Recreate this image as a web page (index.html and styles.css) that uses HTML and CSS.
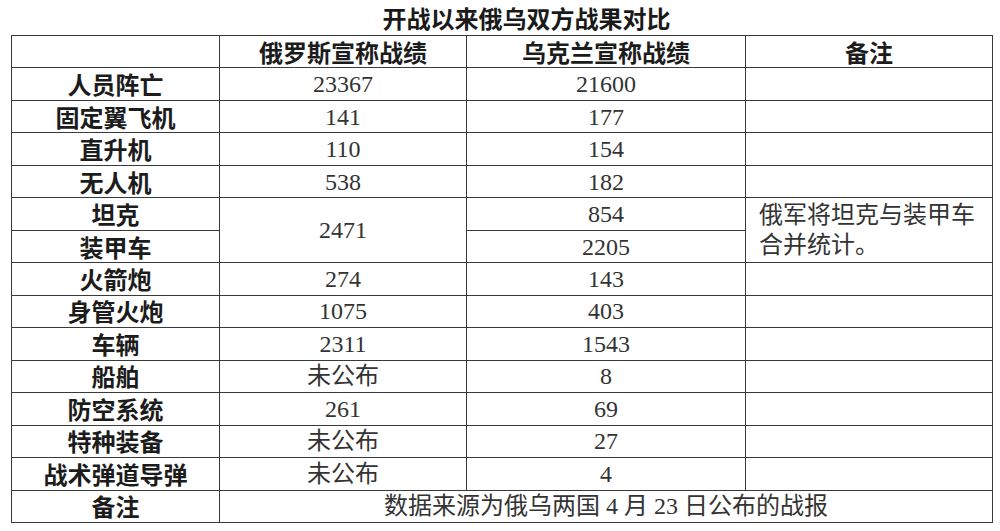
FILE: index.html
```html
<!DOCTYPE html>
<html lang="zh-CN">
<head>
<meta charset="utf-8">
<title>开战以来俄乌双方战果对比</title>
<link rel="stylesheet" href="styles.css">
</head>
<body>
<div class="page">
  <h1 class="title">开战以来俄乌双方战果对比</h1>
  <table class="sheet">
    <colgroup>
      <col class="c-label">
      <col class="c-ru">
      <col class="c-ua">
      <col class="c-note">
    </colgroup>
    <tbody>
      <tr>
        <td class="label"></td>
        <td class="head">俄罗斯宣称战绩</td>
        <td class="head">乌克兰宣称战绩</td>
        <td class="head">备注</td>
      </tr>
      <tr><td class="label">人员阵亡</td><td class="num">23367</td><td class="num">21600</td><td></td></tr>
      <tr><td class="label">固定翼飞机</td><td class="num">141</td><td class="num">177</td><td></td></tr>
      <tr><td class="label">直升机</td><td class="num">110</td><td class="num">154</td><td></td></tr>
      <tr><td class="label">无人机</td><td class="num">538</td><td class="num">182</td><td></td></tr>
      <tr>
        <td class="label">坦克</td>
        <td class="num" rowspan="2">2471</td>
        <td class="num">854</td>
        <td class="note" rowspan="2">俄军将坦克与装甲车<br>合并统计。</td>
      </tr>
      <tr><td class="label">装甲车</td><td class="num">2205</td></tr>
      <tr><td class="label">火箭炮</td><td class="num">274</td><td class="num">143</td><td></td></tr>
      <tr><td class="label">身管火炮</td><td class="num">1075</td><td class="num">403</td><td></td></tr>
      <tr><td class="label">车辆</td><td class="num">2311</td><td class="num">1543</td><td></td></tr>
      <tr><td class="label">船舶</td><td class="num cn">未公布</td><td class="num">8</td><td></td></tr>
      <tr><td class="label">防空系统</td><td class="num">261</td><td class="num">69</td><td></td></tr>
      <tr><td class="label">特种装备</td><td class="num cn">未公布</td><td class="num">27</td><td></td></tr>
      <tr><td class="label">战术弹道导弹</td><td class="num cn">未公布</td><td class="num">4</td><td></td></tr>
      <tr>
        <td class="label">备注</td>
        <td class="source" colspan="3">数据来源为俄乌两国 4 月 23 日公布的战报</td>
      </tr>
    </tbody>
  </table>
</div>
</body>
</html>
```

FILE: styles.css
```css
html, body {
  margin: 0;
  padding: 0;
  background: #ffffff;
}

.page {
  width: 1000px;
  height: 531px;
  font-family: "Liberation Serif", "Noto Sans CJK SC", serif;
  color: #2a2a2a;
}

.title {
  margin: 0;
  height: 35px;
  padding-left: 53px;
  box-sizing: border-box;
  font-family: "Noto Sans CJK SC", sans-serif;
  font-size: 24px;
  font-weight: 700;
  line-height: 35px;
  text-align: center;
  color: #1a1a1a;
}

.sheet {
  margin-left: 11px;
  width: 981px;
  table-layout: fixed;
  border-collapse: collapse;
}

.c-label { width: 208px; }
.c-ru { width: 247px; }
.c-ua { width: 279px; }
.c-note { width: 247px; }

.sheet td {
  border: 1px solid #3a3a3a;
  height: 32.47px;
  padding: 0;
  box-sizing: border-box;
  text-align: center;
  vertical-align: middle;
  font-size: 24px;
  line-height: 28px;
}

.label,
.head {
  font-family: "Noto Sans CJK SC", sans-serif;
  font-weight: 700;
  color: #1c1c1c;
}

.num {
  font-family: "Liberation Serif", "Noto Sans CJK SC", serif;
  color: #333333;
}

.num.cn,
.source,
.note {
  font-family: "Liberation Serif", "Noto Sans CJK SC", sans-serif;
  font-weight: 400;
  color: #333333;
}

.sheet td.note {
  text-align: left;
  padding-left: 13px;
  line-height: 30px;
}
```
